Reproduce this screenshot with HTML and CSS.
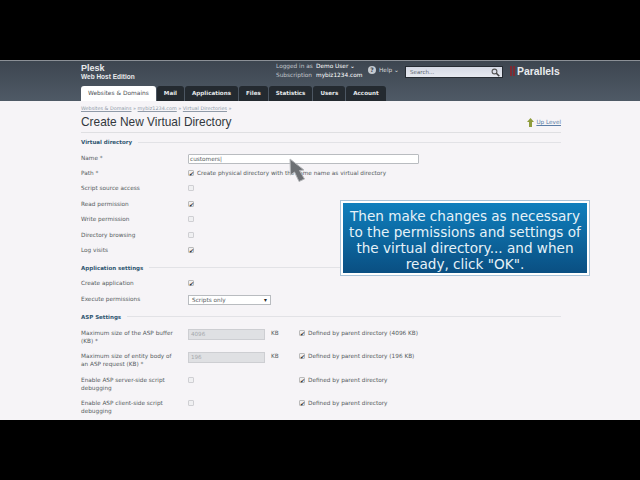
FILE: index.html
```html
<!DOCTYPE html>
<html lang="en">
<head>
    <meta charset="UTF-8">
    <title>Create New Virtual Directory</title>
    <link rel="stylesheet" href="styles.css">
</head>

<body>
    <div class="frame">
        <!-- Header -->
        <div class="header">
            <div class="header-top">
                <div class="brand">
                    <div class="brand-name">Plesk</div>
                    <div class="brand-sub">Web Host Edition</div>
                </div>
                <div class="login-info">
                    <span class="dim">Logged in as</span><span>Demo User ⌄</span>
                    <span class="dim">Subscription</span><span>mybiz1234.com</span>
                </div>
                <div class="help">
                    <span class="help-icon">?</span>
                    <span>Help ⌄</span>
                </div>
                <div class="search">
                    <span>Search...</span>
                    <svg width="9" height="9" viewBox="0 0 9 9">
                        <circle cx="3.5" cy="3.5" r="2.4" fill="none" stroke="#555" stroke-width="1.1"/>
                        <path d="M5.3 5.3L8.3 8.3" stroke="#444" stroke-width="1.6"/>
                    </svg>
                </div>
                <div class="logo"><span class="logo-mark"></span>Parallels</div>
            </div>
            <div class="tabs">
                <div class="tab active">Websites &amp; Domains</div>
                <div class="tab">Mail</div>
                <div class="tab">Applications</div>
                <div class="tab">Files</div>
                <div class="tab">Statistics</div>
                <div class="tab">Users</div>
                <div class="tab">Account</div>
            </div>
        </div>

        <!-- Page content -->
        <div class="content">
            <div class="crumbs"><u>Websites &amp; Domains</u> » <u>mybiz1234.com</u> » <u>Virtual Directories</u> »</div>
            <div class="title-row">
                <h2>Create New Virtual Directory</h2>
                <div class="up-level">
                    <svg width="7" height="9" viewBox="0 0 7 9"><path d="M3.5 0L7 4H5V9H2V4H0Z" fill="#8f9c3c"/></svg>
                    <u>Up Level</u>
                </div>
            </div>

            <div class="section">Virtual directory</div>
            <div class="row"><label>Name *</label><div class="text-input">customers|</div></div>
            <div class="row"><label>Path *</label><div class="check-line"><span class="box on">✔</span>Create physical directory with the same name as virtual directory</div></div>
            <div class="row"><label>Script source access</label><span class="box"></span></div>
            <div class="row"><label>Read permission</label><span class="box on">✔</span></div>
            <div class="row"><label>Write permission</label><span class="box"></span></div>
            <div class="row"><label>Directory browsing</label><span class="box"></span></div>
            <div class="row"><label>Log visits</label><span class="box on">✔</span></div>

            <div class="section">Application settings</div>
            <div class="row"><label>Create application</label><span class="box on">✔</span></div>
            <div class="row"><label>Execute permissions</label><div class="select">Scripts only<span class="arrow">▾</span></div></div>

            <div class="section">ASP Settings</div>
            <div class="asp-row">
                <label>Maximum size of the ASP buffer (KB) *</label>
                <div class="num-input">4096</div><span class="unit">KB</span>
                <div class="check-line"><span class="box on">✔</span>Defined by parent directory (4096 KB)</div>
            </div>
            <div class="asp-row">
                <label>Maximum size of entity body of an ASP request (KB) *</label>
                <div class="num-input">196</div><span class="unit">KB</span>
                <div class="check-line"><span class="box on">✔</span>Defined by parent directory (196 KB)</div>
            </div>
            <div class="asp-row">
                <label>Enable ASP server-side script debugging</label>
                <div class="num-slot"><span class="box"></span></div><span class="unit"></span>
                <div class="check-line"><span class="box on">✔</span>Defined by parent directory</div>
            </div>
            <div class="asp-row">
                <label>Enable ASP client-side script debugging</label>
                <div class="num-slot"><span class="box"></span></div><span class="unit"></span>
                <div class="check-line"><span class="box on">✔</span>Defined by parent directory</div>
            </div>
        </div>

        <!-- Overlays from the video -->
        <div class="callout">Then make changes as necessary to the permissions and settings of the virtual directory... and when ready, click "OK".</div>
        <svg class="cursor" width="18" height="25" viewBox="0 0 18 25">
            <path d="M1 1L1.5 17L5.5 14L10 23.5L15.5 21L10.5 12.5L15 12Z" fill="#6d7074" stroke="#b4b6b9" stroke-width="1"/>
        </svg>
    </div>
</body>

</html>
```

FILE: styles.css
```css
/* General Styles */
body {
    margin: 0;
    padding: 60px 0 0;
    height: 480px;
    box-sizing: border-box;
    background-color: #000;
    font-family: "DejaVu Sans", sans-serif;
    overflow: hidden;
}

.frame {
    position: relative;
    height: 360px;
    overflow: hidden;
    background-color: #f6f4f7;
}

/* Header */
.header {
    height: 41px;
    box-sizing: border-box;
    padding: 0 0 0 81px;
    background: linear-gradient(to bottom, #3d4650, #4f5a66);
    border-top: 1px solid #8b9096;
    color: #fff;
}

.header-top {
    display: flex;
    height: 25px;
}

.brand {
    width: 195px;
    padding-top: 2px;
}

.brand-name {
    font-family: "Liberation Sans", sans-serif;
    font-size: 9px;
    font-weight: bold;
    color: #e8eaec;
    line-height: 10px;
}

.brand-sub {
    font-family: "Liberation Sans", sans-serif;
    font-size: 6.5px;
    font-weight: bold;
    line-height: 8px;
    color: #e8eaec;
}

/* Labels end at the same x, values start together */
.login-info {
    display: grid;
    grid-template-columns: 36px auto;
    grid-auto-rows: 9px;
    column-gap: 4px;
    align-content: start;
    width: 92px;
    padding-top: 1px;
    font-size: 5.8px;
    line-height: 9px;
    white-space: nowrap;
}

.dim {
    color: #c2c7cc;
    text-align: right;
}

.help {
    display: flex;
    align-items: center;
    gap: 3px;
    width: 37px;
    height: 14px;
    margin-top: 2px;
    font-size: 5.8px;
    color: #d6d9dc;
}

.help-icon {
    width: 8px;
    height: 8px;
    border-radius: 50%;
    background-color: #c4cad0;
    color: #3d4650;
    font-size: 6px;
    font-weight: bold;
    line-height: 8px;
    text-align: center;
}

.search {
    display: flex;
    justify-content: space-between;
    align-items: center;
    box-sizing: border-box;
    width: 98px;
    height: 12px;
    margin: 5px 7px 0 0;
    padding: 0 2px 0 4px;
    background: linear-gradient(to bottom, #d4d9e4, #e6e9f0);
    border: 1px solid #262c33;
    font-size: 5.5px;
    color: #5b6470;
}

.logo {
    display: flex;
    align-items: center;
    height: 12px;
    margin-top: 4px;
    font-family: "Liberation Sans", sans-serif;
    font-size: 10.4px;
    font-weight: bold;
    color: #e9ebee;
}

.logo-mark {
    width: 1px;
    height: 10px;
    margin-right: 2px;
    border-left: 2px solid #7c2a33;
    border-right: 2px solid #7c2a33;
}

.tabs {
    display: flex;
    gap: 1px;
    height: 15px;
}

.tab {
    padding: 0 7px;
    background-color: #242a30;
    border-radius: 3px 3px 0 0;
    font-size: 5.6px;
    font-weight: bold;
    line-height: 15px;
    color: #e4e7ea;
    white-space: nowrap;
}

.tab.active {
    background-color: #fff;
    color: #4b5055;
    font-size: 5.9px;
    font-weight: normal;
}

/* Page content */
.content {
    width: 480px;
    padding: 3px 0 0 81px;
    font-size: 5.75px;
    color: #555b60;
}

.crumbs {
    height: 9px;
    font-size: 4.9px;
    line-height: 9px;
    color: #8f9aa8;
}

.title-row {
    display: flex;
    justify-content: space-between;
    align-items: center;
    height: 18px;
    padding-bottom: 1px;
    border-bottom: 1px solid #dfdfe2;
}

h2 {
    margin: 0;
    font-family: "Liberation Sans", sans-serif;
    font-size: 11.9px;
    font-weight: normal;
    color: #33383d;
}

.up-level {
    display: flex;
    align-items: center;
    gap: 2px;
    font-size: 5.7px;
    color: #5b7da6;
}

.section {
    display: flex;
    align-items: center;
    gap: 6px;
    height: 14px;
    margin: 3px 0 1px;
    font-size: 5.5px;
    font-weight: bold;
    color: #2f5670;
    white-space: nowrap;
}

.title-row + .section {
    margin-top: 2px;
}

.section::after {
    content: "";
    flex: 1;
    height: 1px;
    background-color: #e2e2e6;
}

.row {
    display: flex;
    align-items: center;
    height: 15.4px;
}

label {
    flex: none;
    width: 107px;
}

.box {
    flex: none;
    box-sizing: border-box;
    width: 6px;
    height: 6px;
    background-color: #f0f0f2;
    border: 1px solid #cfcfd3;
    border-radius: 1px;
    font-size: 6px;
    line-height: 5px;
    color: #333;
}

.box.on {
    border-color: #bbb;
}

.text-input {
    box-sizing: border-box;
    width: 231px;
    height: 10px;
    margin-top: 2px;
    padding-left: 1px;
    background-color: #fff;
    border: 1px solid #b9bcc0;
    border-radius: 1px;
    line-height: 8px;
}

.check-line {
    display: flex;
    align-items: center;
    gap: 3px;
    height: 8px;
    white-space: nowrap;
}

.select {
    display: flex;
    justify-content: space-between;
    box-sizing: border-box;
    width: 83px;
    height: 10px;
    margin-top: 2px;
    padding: 0 3px;
    background-color: #fff;
    border: 1px solid #b9bcc0;
    line-height: 8px;
}

.arrow {
    color: #222;
}

.asp-row {
    display: flex;
    align-items: flex-start;
    box-sizing: border-box;
    height: 23.5px;
    padding-top: 4.4px;
    line-height: 8px;
}

.asp-row label {
    width: 96px;
    margin-right: 11px;
}

.num-input {
    box-sizing: border-box;
    width: 77px;
    height: 11px;
    padding-left: 2px;
    background-color: #dfe0e3;
    border: 1px solid #cdced2;
    font-size: 5.6px;
    line-height: 9px;
    color: #a5a8ac;
}

.num-slot {
    width: 77px;
    padding-top: 1px;
    line-height: 0;
}

.num-slot .box {
    display: inline-block;
}

.unit {
    width: 28px;
    padding-left: 6px;
}

/* Overlays */
.callout {
    position: absolute;
    left: 341px;
    top: 141px;
    box-sizing: border-box;
    width: 248px;
    height: 74px;
    padding: 5px 4px 0;
    background: linear-gradient(to bottom, #0f7fbd, #0a4f82);
    border: 2px solid #fff;
    outline: 1px solid #a9c3d8;
    font-size: 13.6px;
    line-height: 16px;
    text-align: center;
    color: #e6f2f8;
}

.cursor {
    position: absolute;
    left: 289px;
    top: 98px;
}
```
